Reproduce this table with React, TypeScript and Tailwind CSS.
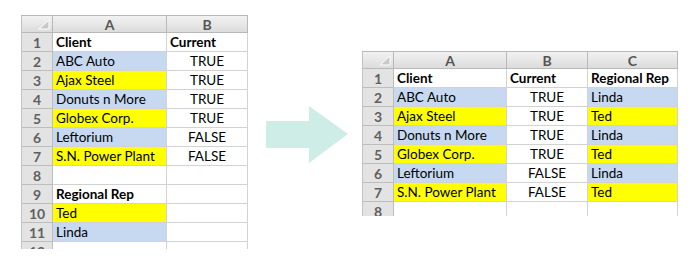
import type { ReactNode } from 'react';

type Fill = 'blue' | 'yellow' | 'none';
type Cell = { text?: string; fill?: Fill; bold?: boolean; center?: boolean };

const FILL: Record<Fill, string> = {
  blue: 'bg-[#c6d9f0]',
  yellow: 'bg-[#ffff00]',
  none: 'bg-white',
};

const LEFT_ROWS: Cell[][] = [
  [{ text: 'Client', bold: true }, { text: 'Current', bold: true }],
  [{ text: 'ABC Auto', fill: 'blue' }, { text: 'TRUE', center: true }],
  [{ text: 'Ajax Steel', fill: 'yellow' }, { text: 'TRUE', center: true }],
  [{ text: 'Donuts n More', fill: 'blue' }, { text: 'TRUE', center: true }],
  [{ text: 'Globex Corp.', fill: 'yellow' }, { text: 'TRUE', center: true }],
  [{ text: 'Leftorium', fill: 'blue' }, { text: 'FALSE', center: true }],
  [{ text: 'S.N. Power Plant', fill: 'yellow' }, { text: 'FALSE', center: true }],
  [{}, {}],
  [{ text: 'Regional Rep', bold: true }, {}],
  [{ text: 'Ted', fill: 'yellow' }, {}],
  [{ text: 'Linda', fill: 'blue' }, {}],
  [{}, {}],
];

const RIGHT_ROWS: Cell[][] = [
  [{ text: 'Client', bold: true }, { text: 'Current', bold: true }, { text: 'Regional Rep', bold: true }],
  [{ text: 'ABC Auto', fill: 'blue' }, { text: 'TRUE', center: true }, { text: 'Linda', fill: 'blue' }],
  [{ text: 'Ajax Steel', fill: 'yellow' }, { text: 'TRUE', center: true }, { text: 'Ted', fill: 'yellow' }],
  [{ text: 'Donuts n More', fill: 'blue' }, { text: 'TRUE', center: true }, { text: 'Linda', fill: 'blue' }],
  [{ text: 'Globex Corp.', fill: 'yellow' }, { text: 'TRUE', center: true }, { text: 'Ted', fill: 'yellow' }],
  [{ text: 'Leftorium', fill: 'blue' }, { text: 'FALSE', center: true }, { text: 'Linda', fill: 'blue' }],
  [{ text: 'S.N. Power Plant', fill: 'yellow' }, { text: 'FALSE', center: true }, { text: 'Ted', fill: 'yellow' }],
  [{}, {}, {}],
];

function Corner() {
  return (
    <div className="h-[17px] bg-gradient-to-b from-[#f2f2f2] to-[#dcdcdc] border-r border-b border-[#b9b9b9] flex items-end justify-end pr-[2px] pb-[2px]">
      <svg width="11" height="10" viewBox="0 0 11 10">
        <polygon points="10,0 10,9 0,9" fill="#c9c9c9" stroke="#ffffff" strokeWidth="1" />
      </svg>
    </div>
  );
}

function Sheet({ widths, letters, rows, height }: { widths: number[]; letters: string[]; rows: Cell[][]; height: string }) {
  const cols: ReactNode[] = [];
  return (
    <div className={`overflow-hidden ${height}`}>
      <div className="flex border-t border-[#b9b9b9] bg-white">
        <div className="flex flex-col border-l border-[#c3c3c3]" style={{ width: widths[0] }}>
          <Corner />
          {rows.map((_, i) => (
            <div
              key={i}
              className="h-[19px] bg-[#e3e3e3] border-r border-b border-[#bdbdbd] flex items-center justify-center text-[14px] font-bold text-[#5f5f5f]"
            >
              {i + 1}
            </div>
          ))}
        </div>
        {letters.map((l, c) => (
          <div key={l} className="flex flex-col" style={{ width: widths[c + 1] }}>
            <div className="h-[17px] bg-gradient-to-b from-[#f2f2f2] to-[#dcdcdc] border-r border-b border-[#b9b9b9] flex items-center justify-center text-[14px] font-bold text-[#555555]">
              {l}
            </div>
            {rows.map((r, i) => {
              const cell = r[c];
              return (
                <div
                  key={i}
                  className={`h-[19px] border-r border-b border-[#d2d2d2] flex items-center px-[3px] text-[13.5px] text-black whitespace-nowrap ${FILL[cell.fill ?? 'none']} ${cell.bold ? 'font-bold' : ''} ${cell.center ? 'justify-center' : ''}`}
                >
                  {cell.text}
                </div>
              );
            })}
          </div>
        ))}
        {cols}
      </div>
    </div>
  );
}

export default function App() {
  return (
    <div className="w-[700px] h-[266px] bg-white flex items-start font-['Lato',sans-serif]">
      <div className="ml-[21px] mt-[15px]">
        <Sheet widths={[32, 114, 81]} letters={['A', 'B']} rows={LEFT_ROWS} height="h-[234px]" />
      </div>
      <svg className="ml-[18px] mt-[106px]" width="83" height="57" viewBox="0 0 83 57">
        <polygon points="0,15 43,15 43,0 82,28 43,57 43,42 0,42" fill="#cdede6" />
      </svg>
      <div className="ml-[13px] mt-[51px]">
        <Sheet widths={[32, 113, 81, 90]} letters={['A', 'B', 'C']} rows={RIGHT_ROWS} height="h-[165px]" />
      </div>
    </div>
  );
}
